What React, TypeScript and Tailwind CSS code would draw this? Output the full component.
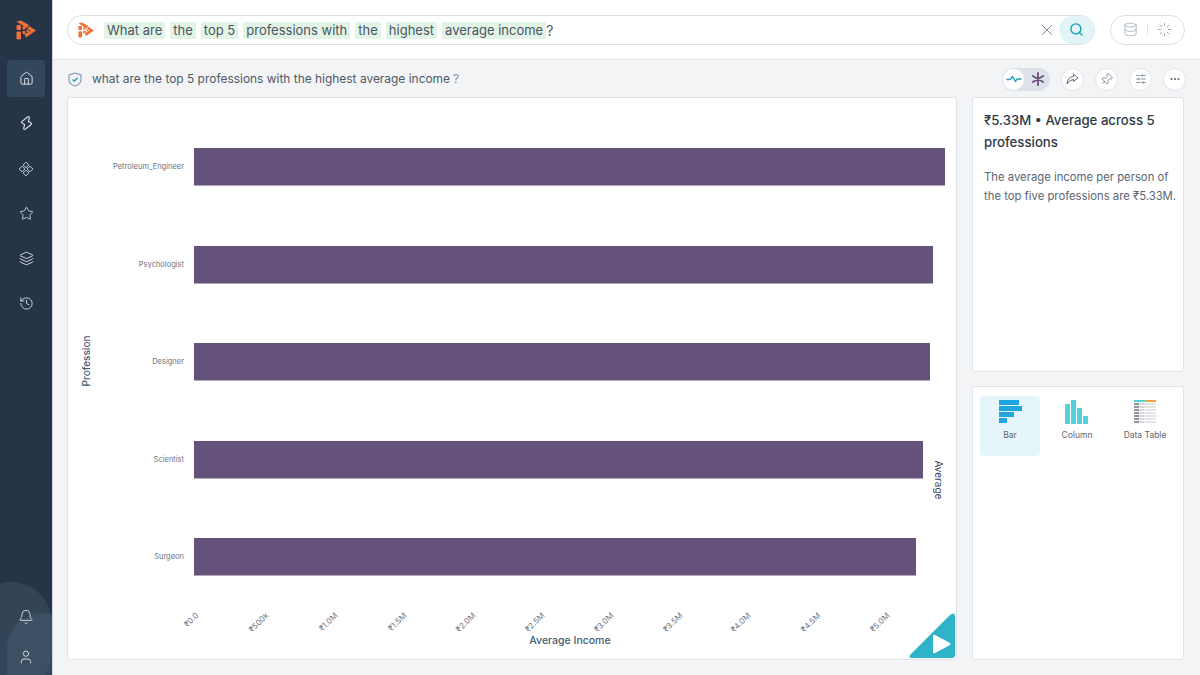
import { Bell, Database, History, House, Layers, Loader, MoreHorizontal, Pin, Search, SlidersHorizontal, Star, User, X } from "lucide-react"

const tokens = ["What are", "the", "top 5", "professions with", "the", "highest", "average income"]

const bars = [
  { label: "Petroleum_Engineer", y: 148, end: 945 },
  { label: "Psychologist", y: 246, end: 933 },
  { label: "Designer", y: 343, end: 930 },
  { label: "Scientist", y: 441, end: 923 },
  { label: "Surgeon", y: 538, end: 916 },
]

const ticks = [
  { label: "₹0.0", x: 199 },
  { label: "₹500k", x: 269 },
  { label: "₹1.0M", x: 338 },
  { label: "₹1.5M", x: 407 },
  { label: "₹2.0M", x: 476 },
  { label: "₹2.5M", x: 545 },
  { label: "₹3.0M", x: 614 },
  { label: "₹3.5M", x: 683 },
  { label: "₹4.0M", x: 751 },
  { label: "₹4.5M", x: 821 },
  { label: "₹5.0M", x: 890 },
]

function Logo({ size }: { size: number }) {
  return (
    <svg width={size} height={size} viewBox="0 0 20 20" fill="#f2703a">
      <path d="M0.5 1.5 L5 0.5 L13 5 L10.5 8 Z" />
      <path d="M13 6 L20 10.5 L10 17.5 L8.5 14.5 L14.5 10.5 L11.5 8.5 Z" />
      <rect x="0.5" y="5" width="4.5" height="5" rx="1" />
      <rect x="0.5" y="11.5" width="4.5" height="8" rx="1" />
      <rect x="6.5" y="6.5" width="3" height="3" rx="0.8" />
      <rect x="6.5" y="11" width="3" height="3" rx="0.8" />
      <rect x="10.5" y="9.5" width="2.5" height="2.5" rx="0.8" />
    </svg>
  )
}

function Diamonds() {
  return (
    <svg width="16" height="16" viewBox="0 0 14 14" fill="none" stroke="#d5dbe2" strokeWidth="0.8">
      <path d="M7 1 L9.5 3.5 L7 6 L4.5 3.5 Z" />
      <path d="M3.5 4.5 L6 7 L3.5 9.5 L1 7 Z" />
      <path d="M10.5 4.5 L13 7 L10.5 9.5 L8 7 Z" />
      <path d="M7 8 L9.5 10.5 L7 13 L4.5 10.5 Z" />
    </svg>
  )
}

function Bolt() {
  return (
    <svg width="13" height="15" viewBox="0 0 14 16" fill="none" stroke="#d5dbe2" strokeWidth="1.3" strokeLinejoin="round">
      <path d="M8 1 L2 6 Q1 7 3 8 L5 9 L4 13 Q4 15 6 14 L12 9 Q13 8 11 7 L9 6 L10 2 Q10 0 8 1 Z" />
    </svg>
  )
}

function RoundBtn({ children }: { children: React.ReactNode }) {
  return (
    <div className="flex h-[23px] w-[23px] items-center justify-center rounded-full border border-[#dfe4ea] bg-white text-[#5d6b7c]">
      {children}
    </div>
  )
}

function ChartTab({ label, active, children }: { label: string; active?: boolean; children: React.ReactNode }) {
  return (
    <div className={`flex h-[60px] w-[60px] flex-col items-center rounded-[4px] pt-[4px] ${active ? "bg-[#e6f5f9]" : ""}`}>
      {children}
      <span className="mt-[5px] text-[8.5px] leading-[12px] text-[#5f6670]">{label}</span>
    </div>
  )
}

export default function App() {
  return (
    <div className="flex h-[675px] w-[1200px] overflow-hidden bg-[#f3f4f5] font-['Inter',sans-serif]">
      <aside className="relative flex h-full w-[53px] shrink-0 flex-col items-center overflow-hidden border-r border-[#cfd4d9] bg-[#253446]">
        <div className="mt-[20px] h-[20px]">
          <Logo size={20} />
        </div>
        <nav className="mt-[20px] flex flex-col items-center">
          <div className="flex h-[37px] w-[38px] items-center justify-center rounded-[4px] bg-[#33475c]">
            <House size={15} color="#e4e8ec" strokeWidth={1.5} />
          </div>
          <div className="mt-[8px] flex h-[37px] w-[38px] items-center justify-center"><Bolt /></div>
          <div className="mt-[8px] flex h-[37px] w-[38px] items-center justify-center"><Diamonds /></div>
          <div className="mt-[8px] flex h-[37px] w-[38px] items-center justify-center"><Star size={15} color="#d5dbe2" strokeWidth={1.4} /></div>
          <div className="mt-[8px] flex h-[37px] w-[38px] items-center justify-center"><Layers size={15} color="#d5dbe2" strokeWidth={1.5} /></div>
          <div className="mt-[8px] flex h-[37px] w-[38px] items-center justify-center"><History size={15} color="#d5dbe2" strokeWidth={1.5} /></div>
        </nav>
        <div className="absolute left-[-30px] top-[582px] h-[110px] w-[82px] rounded-full bg-[#3a4b5e]/70" />
        <div className="absolute left-[7px] top-[613px] h-[90px] w-[70px] rounded-full bg-[#45566a]/60" />
        <div className="relative mt-auto mb-[10px] flex flex-col items-center gap-[24px]">
          <Bell size={16} color="#e0e4e9" strokeWidth={1.3} />
          <User size={16} color="#e0e4e9" strokeWidth={1.3} />
        </div>
      </aside>

      <div className="flex min-w-0 flex-1 flex-col">
        <header className="flex h-[60px] shrink-0 items-center border-b border-[#dfe4ea] bg-white pl-[14px] pr-[15px]">
          <div className="flex h-[30px] w-[1028px] items-center rounded-full border border-[#d8e0ea] pl-[10px]">
            <Logo size={16} />
            <div className="ml-[10px] flex items-center gap-[5px] pt-px text-[13px] text-[#4b5563]">
              {tokens.map((t, i) => (
                <span key={i} className="rounded-[1px] bg-[#e2f4e6] px-[3px] leading-[17px]">{t}</span>
              ))}
            </div>
            <span className="pt-px text-[14px] text-[#4b5563]">?</span>
            <X size={18} color="#7c8aa0" strokeWidth={1.3} className="ml-auto" />
            <div className="ml-[3px] flex h-[28px] w-[35px] items-center justify-center rounded-full bg-[#e3f4f7]">
              <Search size={15} color="#1c9fb5" strokeWidth={2.2} />
            </div>
          </div>
          <div className="ml-[15px] flex h-[30px] w-[75px] items-center justify-between rounded-full border border-[#d8e0ea] px-[12px]">
            <Database size={15} color="#9aa6b5" strokeWidth={1.2} />
            <div className="h-[13px] w-px bg-[#e4e8ec]" />
            <Loader size={15} color="#8a97a8" strokeWidth={1.3} />
          </div>
        </header>

        <div className="flex h-[37px] shrink-0 items-center pl-[15px] pr-[14px] pt-px">
          <svg width="14" height="15" viewBox="0 0 14 15" fill="none">
            <path d="M7 1 L13 3 V8 Q13 12 7 14 Q1 12 1 8 V3 Z" stroke="#7f93ad" strokeWidth="1.1" />
            <path d="M4.5 7.5 L6.3 9.3 L9.6 5.8" stroke="#1fa9c4" strokeWidth="1.4" />
          </svg>
          <span className="ml-[10px] text-[11.95px] text-[#4f5a68]">what are the top 5 professions with the highest average income</span>
          <span className="ml-[3px] text-[12px] text-[#7f93ad]">?</span>
          <div className="ml-auto flex items-center gap-[11px]">
            <div className="flex h-[23px] w-[48px] items-center justify-between rounded-full bg-[#dde1e9]">
              <div className="flex h-[23px] w-[23px] items-center justify-center rounded-full border border-[#dfe4ea] bg-white">
                <svg width="16" height="12" viewBox="0 0 16 12" fill="none" stroke="#1c9fb5" strokeWidth="1.4" strokeLinejoin="round">
                  <path d="M0.5 6.5 H4 L6.5 3.5 L9.5 8.5 L11 6 H15.5" />
                </svg>
              </div>
              <svg width="16" height="16" viewBox="0 0 16 16" stroke="#6b4c7d" strokeWidth="1.8" strokeLinecap="round" className="mr-[4px]">
                <path d="M8 2 V14 M2.8 5 L13.2 11 M2.8 11 L13.2 5" />
              </svg>
            </div>
            <RoundBtn>
              <svg width="13" height="12" viewBox="0 0 13 12" fill="none" stroke="#5d6b7c" strokeWidth="1" strokeLinejoin="round">
                <path d="M7.5 1 L12 5 L7.5 8.5 V6.5 Q3.5 6.5 1 11 Q1.5 4 7.5 3.5 Z" />
              </svg>
            </RoundBtn>
            <RoundBtn><Pin size={13} strokeWidth={1.3} className="rotate-45" /></RoundBtn>
            <RoundBtn><SlidersHorizontal size={12} strokeWidth={1.4} /></RoundBtn>
            <RoundBtn><MoreHorizontal size={12} strokeWidth={2.4} /></RoundBtn>
          </div>
        </div>

        <main className="flex min-h-0 flex-1 gap-[15px] pb-[15px] pl-[14px] pr-[16px]">
          <section className="relative w-[890px] overflow-hidden rounded-[3px] border border-[#dfe4ea] bg-white">
            <svg width="888" height="561" viewBox="68 98 888 561" className="block">
              {bars.map((b) => (
                <g key={b.label}>
                  <rect x="194" y={b.y} width={b.end - 194} height="37.5" fill="#64527a" />
                  <text x="184" y={b.y + 21} textAnchor="end" fontSize="7.5" fill="#6b7280">{b.label}</text>
                </g>
              ))}
              {ticks.map((t) => (
                <text key={t.label} x={t.x} y="616" textAnchor="end" fontSize="8" fill="#6b7280" transform={`rotate(-45 ${t.x} 616)`}>{t.label}</text>
              ))}
              <text x="570" y="644" textAnchor="middle" fontSize="10.5" fontWeight="500" fill="#465b72">Average Income</text>
              <text x="0" y="0" textAnchor="middle" fontSize="10" fontWeight="500" fill="#465b72" transform="translate(90 361) rotate(-90)">Profession</text>
              <text x="0" y="0" textAnchor="middle" fontSize="10" fill="#374151" transform="translate(935 480) rotate(90)">Average</text>
              <path d="M910 655 L950 615 Q955 611 955 617 V655 Q955 658 952 658 H912 Q908 658 910 655 Z" fill="#2fb3c8" />
              <path d="M933 636 Q933 634 935 635 L950 643 Q951 644 950 645 L935 653 Q933 654 933 652 Z" fill="#fff" />
            </svg>
          </section>

          <div className="flex min-w-0 flex-1 flex-col gap-[14px]">
            <section className="h-[275px] rounded-[3px] border border-[#dfe4ea] bg-white pl-[11px] pr-[4px] pt-[11px]">
              <h2 className="pr-[8px] text-[13.2px] font-medium leading-[22px] text-[#2f3a47]">₹5.33M • Average across 5 professions</h2>
              <p className="mt-[15px] text-[11.3px] leading-[19px] text-[#5c6672]">The average income per person of the top five professions are ₹5.33M.</p>
            </section>
            <section className="min-h-0 flex-1 rounded-[3px] border border-[#dfe4ea] bg-white pl-[7px] pt-[9px]">
              <div className="flex gap-[7px]">
                <ChartTab label="Bar" active>
                  <svg width="24" height="24" viewBox="0 0 24 24" fill="#1fa5e0">
                    <rect x="1" y="0" width="20" height="5" />
                    <rect x="1" y="6" width="23" height="5" />
                    <rect x="1" y="12" width="15" height="5" />
                    <rect x="1" y="18" width="8" height="5" />
                  </svg>
                </ChartTab>
                <ChartTab label="Column">
                  <svg width="24" height="24" viewBox="0 0 24 24" fill="#55d1dc">
                    <rect x="0" y="4" width="5" height="20" />
                    <rect x="6" y="0" width="5" height="24" />
                    <rect x="12" y="8" width="5" height="16" />
                    <rect x="18" y="16" width="5" height="8" />
                  </svg>
                </ChartTab>
                <div className="ml-px">
                  <ChartTab label="Data Table">
                    <svg width="24" height="24" viewBox="0 0 24 24">
                      <rect x="1" y="0" width="11" height="2" fill="#55d1dc" />
                      <rect x="12" y="0" width="11" height="2" fill="#f5a63a" />
                      {[3, 6, 9, 12, 15, 18, 21].map((y) => (
                        <g key={y}>
                          <rect x="1" y={y} width="5" height="2" fill="#8f9499" />
                          <rect x="6.5" y={y} width="5" height="2" fill="#d5d8db" />
                          <rect x="12" y={y} width="11" height="2" fill="#e2e4e7" />
                        </g>
                      ))}
                    </svg>
                  </ChartTab>
                </div>
              </div>
            </section>
          </div>
        </main>
      </div>
    </div>
  )
}
